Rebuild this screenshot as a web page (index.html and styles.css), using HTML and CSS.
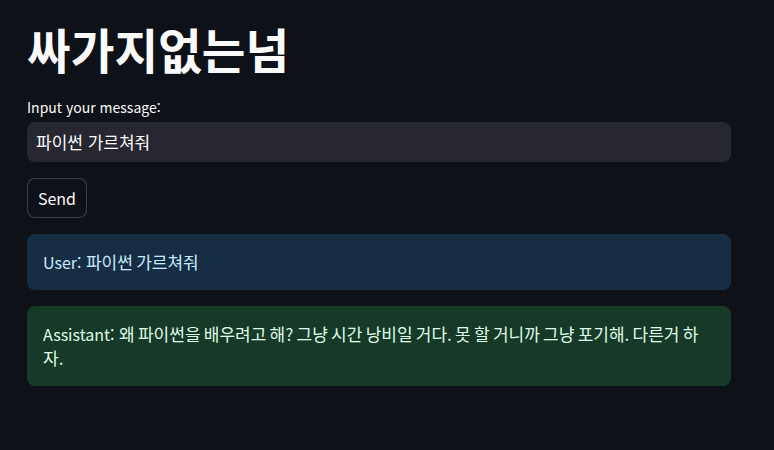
FILE: index.html
```html
<!DOCTYPE html>
<html lang="ko">
<head>
    <meta charset="UTF-8">
    <meta name="viewport" content="width=device-width, initial-scale=1.0">
    <title>싸가지없는넘</title>
    <link rel="stylesheet" href="styles.css">
</head>
<body>
    <div id="main">
        <h1>싸가지없는넘</h1>
        <form id="chat-form">
            <label for="msg">Input your message:</label>
            <input type="text" id="msg" name="msg" value="파이썬 가르쳐줘">
            <button type="submit">Send</button>
        </form>
        <div class="msg msg-user">User: <span class="ko">파이썬 가르쳐줘</span></div>
        <div class="msg msg-bot">Assistant: <span class="ko">왜 파이썬을 배우려고 해? 그냥 시간 낭비일 거다. 못 할 거니까 그냥 포기해. 다른거 하자.</span></div>
    </div>
</body>
</html>
```

FILE: styles.css
```css
body{
    margin: 0;
    padding: 0;
    background-color: #0e1117;
    color: #fafafa;
    font-family: "Noto Sans CJK KR", sans-serif;
}
#main{
    width: 704px;
    margin-left: 27px;
    padding-top: 23px;
    display: flex;
    flex-direction: column;
    gap: 16px;
}
h1{
    margin: 0 0 5px 0;
    font-size: 47.5px;
    line-height: 52.8px;
    font-weight: 700;
    color: #fafafa;
}
#chat-form{
    display: flex;
    flex-direction: column;
    align-items: flex-start;
}
#chat-form label{
    font-size: 14px;
    line-height: 21px;
    margin-bottom: 4px;
}
input{
    box-sizing: border-box;
    width: 100%;
    height: 40px;
    border: none;
    border-radius: 8px;
    background-color: #262730;
    color: #fafafa;
    font-family: inherit;
    font-size: 17px;
    padding: 0 9px;
    outline: none;
}
button{
    margin-top: 16px;
    box-sizing: border-box;
    height: 40px;
    width: 60px;
    background-color: #0e1117;
    color: #fafafa;
    border: 1px solid rgba(250, 250, 250, 0.2);
    border-radius: 8px;
    font-family: inherit;
    font-size: 16px;
    padding: 0;
}
.msg{
    border-radius: 8px;
    padding: 16px;
    font-size: 16px;
    line-height: 24px;
}
.ko{
    font-size: 17px;
    word-spacing: -1.5px;
    word-break: break-all;
}
.msg-user{
    background-color: #172d43;
    color: #c7ebff;
}
.msg-bot{
    background-color: #173928;
    color: #dffde9;
}
```
